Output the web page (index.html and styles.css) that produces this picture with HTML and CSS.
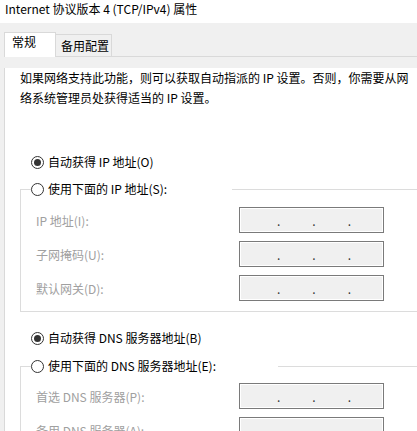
FILE: index.html
```html
<!DOCTYPE html>
<html lang="zh-CN">
<head>
  <meta charset="UTF-8">
  <title>Internet 协议版本 4 (TCP/IPv4) 属性</title>
  <link rel="stylesheet" href="styles.css">
</head>
<body>
  <!-- Window title -->
  <div class="titlebar">Internet 协议版本 4 (TCP/IPv4) 属性</div>

  <div class="dialog">
    <!-- Tab strip -->
    <div class="tabs">
      <div class="tab active">常规</div>
      <div class="tab">备用配置</div>
    </div>

    <!-- General tab content -->
    <div class="panel">
      <p class="intro">如果网络支持此功能，则可以获取自动指派的 IP 设置。否则，你需要从网络系统管理员处获得适当的 IP 设置。</p>

      <div class="option first">
        <span class="radio checked"></span>
        <span>自动获得 IP 地址(O)</span>
      </div>

      <fieldset class="group">
        <legend class="option wide-ip">
          <span class="radio"></span>
          <span>使用下面的 IP 地址(S):</span>
        </legend>
        <div class="field">
          <span class="label">IP 地址(I):</span>
          <div class="ip-box"><span>.</span><span>.</span><span>.</span></div>
        </div>
        <div class="field">
          <span class="label">子网掩码(U):</span>
          <div class="ip-box"><span>.</span><span>.</span><span>.</span></div>
        </div>
        <div class="field">
          <span class="label">默认网关(D):</span>
          <div class="ip-box"><span>.</span><span>.</span><span>.</span></div>
        </div>
      </fieldset>

      <div class="option dns-auto">
        <span class="radio checked"></span>
        <span>自动获得 DNS 服务器地址(B)</span>
      </div>

      <fieldset class="group dns-group">
        <legend class="option wide-dns">
          <span class="radio"></span>
          <span>使用下面的 DNS 服务器地址(E):</span>
        </legend>
        <div class="field">
          <span class="label">首选 DNS 服务器(P):</span>
          <div class="ip-box"><span>.</span><span>.</span><span>.</span></div>
        </div>
        <div class="field">
          <span class="label">备用 DNS 服务器(A):</span>
          <div class="ip-box"><span>.</span><span>.</span><span>.</span></div>
        </div>
      </fieldset>
    </div>
  </div>
</body>
</html>
```

FILE: styles.css
```css
/* Reset */
* {
  margin: 0;
  padding: 0;
  box-sizing: border-box;
}

html, body {
  overflow: hidden;
}

body {
  font-family: 'Noto Sans CJK SC', 'Noto Sans', sans-serif;
  font-size: 12px;
  color: #000;
  background-color: #fff;
  width: 417px;
  height: 431px;
}

/* Title bar */
.titlebar {
  height: 23px;
  line-height: 18px;
  padding-left: 5px;
  background-color: #fff;
}

/* Dialog body */
.dialog {
  background-color: #f0f0f0;
  padding-left: 4px;
  height: 408px;
}

/* Tabs */
.tabs {
  display: flex;
  align-items: flex-end;
  height: 34px;
  border-bottom: 1px solid #d9d9d9;
}

.tab {
  height: 22px;
  line-height: 18px;
  padding: 2px 2px 0 5px;
  border: 1px solid #d9d9d9;
  border-left: none;
  border-bottom: none;
  background-color: #f0f0f0;
}

.tab.active {
  height: 25px;
  width: 52px;
  padding: 0 0 0 7px;
  margin-bottom: -1px;
  border-left: 1px solid #d9d9d9;
  background-color: #fff;
}

/* Panel */
.panel {
  background-color: #fff;
  border-left: 1px solid #d9d9d9;
  padding-left: 15px;
  height: 100%;
}

.intro {
  margin-top: 11px;
  line-height: 20px;
  padding-right: 4px;
}

/* Radio rows */
.option {
  display: flex;
  align-items: center;
  gap: 4px;
  height: 20px;
  line-height: 20px;
}

.option.first {
  margin-top: 44px;
  padding-left: 11px;
}

.option.dns-auto {
  margin-top: 16px;
  padding-left: 11px;
}

.radio {
  display: inline-block;
  width: 13px;
  height: 13px;
  border: 1px solid #333;
  border-radius: 50%;
  background-color: #fff;
  position: relative;
}

.radio.checked::after {
  content: '';
  position: absolute;
  top: 2px;
  left: 2px;
  width: 7px;
  height: 7px;
  border-radius: 50%;
  background-color: #333;
}

/* Group boxes */
.group {
  margin: 7px -20px 0 0;
  border: 1px solid #dcdcdc;
  padding: 8px 0 10px 0;
}

.dns-group {
  margin-top: 8px;
  padding-top: 7px;
}

legend.option {
  margin-left: 10px;
  padding: 0;
}

.wide-ip {
  width: 201px;
}

.wide-dns {
  width: 247px;
}

/* Address rows */
.field {
  display: grid;
  grid-template-columns: 203px 145px;
  align-items: center;
  padding-left: 15px;
  height: 26px;
}

.field + .field {
  margin-top: 8px;
}

.label {
  color: #a0a0a0;
}

.ip-box {
  height: 26px;
  border: 1px solid #7a7a7a;
  box-shadow: inset 0 0 0 1px #fff;
  background-color: #f0f0f0;
  display: flex;
  align-items: center;
  gap: 32px;
  padding: 2px 0 0 37px;
  line-height: 12px;
  color: #333;
}
```
